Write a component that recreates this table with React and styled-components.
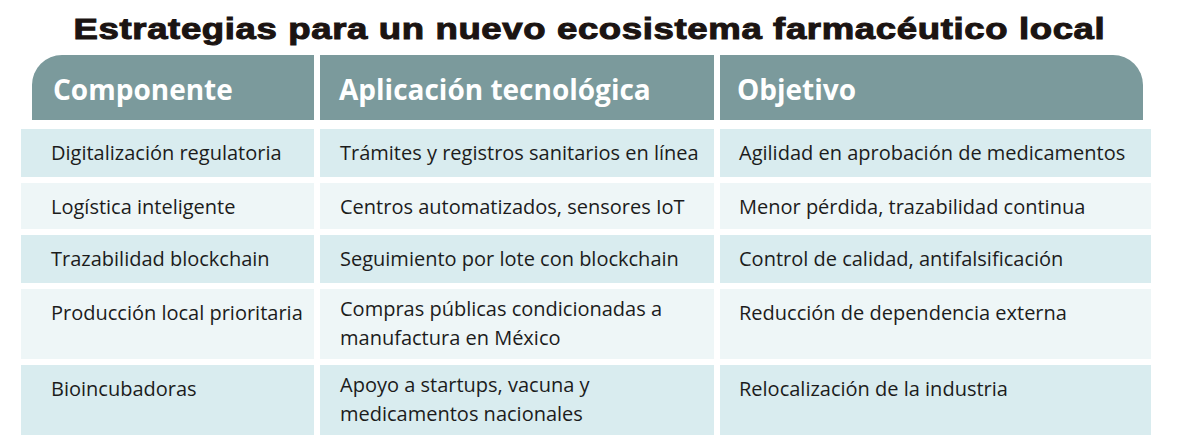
import React from "react";
import styled, { createGlobalStyle } from "styled-components";

const Global = createGlobalStyle`
  html, body { margin: 0; padding: 0; background: #ffffff; }
  body { font-family: "Open Sans", "Noto Sans", sans-serif; }
`;

const Page = styled.div`
  width: 1179px;
  height: 447px;
  background: #ffffff;
  overflow: hidden;
`;

const TitleBar = styled.div`
  padding-top: 14px;
  height: 30px;
  display: flex;
  justify-content: center;
`;

const Title = styled.h1`
  margin: 0;
  display: inline-block;
  font-family: "Liberation Sans", Arial, sans-serif;
  font-weight: 700;
  font-size: 29px;
  line-height: 30px;
  letter-spacing: 0.5px;
  color: #1b1412;
  -webkit-text-stroke: 1px #1b1412;
  transform: scaleX(1.26);
  transform-origin: center;
  white-space: nowrap;
`;

const Grid = styled.div`
  display: grid;
  grid-template-columns: 293px 394px 431px;
  column-gap: 6px;
  margin-left: 21px;
`;

const HeaderGrid = styled(Grid)`
  margin-top: 11px;
  height: 65px;
  margin-bottom: 9px;
`;

const HeadCell = styled.div`
  background: #7b9a9c;
  color: #ffffff;
  font-family: "Open Sans", "Noto Sans", sans-serif;
  font-weight: 700;
  font-size: 28px;
  display: flex;
  align-items: center;
  padding-top: 3px;
  padding-left: ${(p) => p.$pad}px;
  margin-left: ${(p) => p.$ml || 0}px;
  margin-right: ${(p) => p.$mr || 0}px;
  border-top-left-radius: ${(p) => p.$tl || 0}px;
  border-top-right-radius: ${(p) => p.$tr || 0}px;
`;

const Body = styled(Grid)`
  row-gap: 6px;
`;

const Cell = styled.div`
  height: ${(p) => p.$h}px;
  box-sizing: border-box;
  background: ${(p) => (p.$dark ? "#d9ecef" : "#eef6f7")};
  color: #1c1c1c;
  font-size: 20px;
  line-height: ${(p) => (p.$multi ? 29 : 28)}px;
  padding: ${(p) => (p.$multi ? 5 : 10)}px 6px 0 ${(p) => p.$pad}px;
  white-space: nowrap;
`;

const rows = [
  { h: 48, dark: true, c: ["Digitalización regulatoria", "Trámites y registros sanitarios en línea", "Agilidad en aprobación de medicamentos"] },
  { h: 46, dark: false, c: ["Logística inteligente", "Centros automatizados, sensores IoT", "Menor pérdida, trazabilidad continua"] },
  { h: 48, dark: true, c: ["Trazabilidad blockchain", "Seguimiento por lote con blockchain", "Control de calidad, antifalsificación"] },
  { h: 70, dark: false, c: ["Producción local prioritaria", ["Compras públicas condicionadas a", "manufactura en México"], "Reducción de dependencia externa"] },
  { h: 70, dark: true, c: ["Bioincubadoras", ["Apoyo a startups, vacuna y", "medicamentos nacionales"], "Relocalización de la industria"] },
];

const pads = [30, 20, 19];

export default function App() {
  return (
    <Page>
      <Global />
      <TitleBar>
        <Title>Estrategias para un nuevo ecosistema farmacéutico local</Title>
      </TitleBar>
      <HeaderGrid>
        <HeadCell $pad={21} $ml={11} $tl={30}>Componente</HeadCell>
        <HeadCell $pad={19}>Aplicación tecnológica</HeadCell>
        <HeadCell $pad={17} $mr={8} $tr={30}>Objetivo</HeadCell>
      </HeaderGrid>
      <Body>
        {rows.map((r, i) =>
          r.c.map((t, j) => (
            <Cell
              key={`${i}-${j}`}
              $h={r.h}
              $dark={r.dark}
              $pad={pads[j]}
              $multi={Array.isArray(t)}
            >
              {Array.isArray(t) ? t.map((l, k) => <div key={k}>{l}</div>) : t}
            </Cell>
          ))
        )}
      </Body>
    </Page>
  );
}
